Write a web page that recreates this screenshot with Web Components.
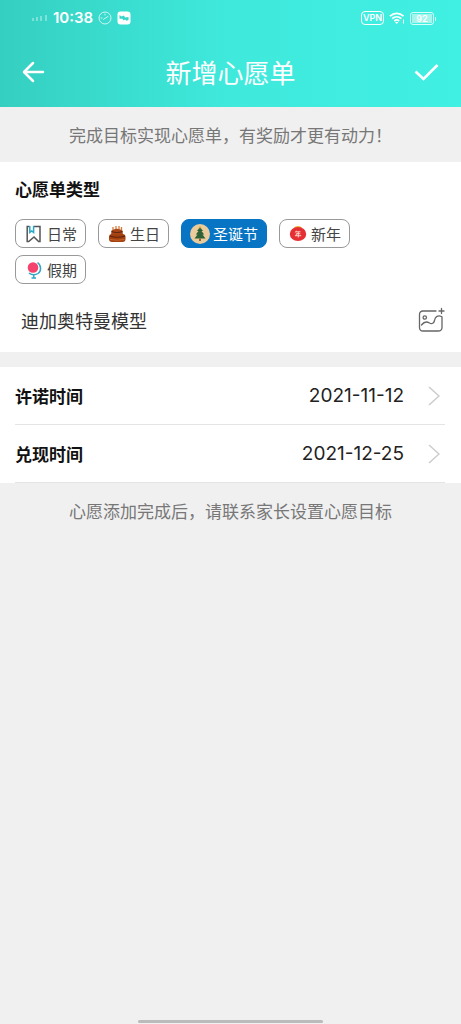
<!DOCTYPE html>
<html lang="zh-CN">
<head>
<meta charset="utf-8">
<meta name="viewport" content="width=device-width, initial-scale=1">
<title>新增心愿单</title>
<style>
  html, body { margin: 0; height: 100%; }
  body {
    background: #f0f0f0;
    color: #111;
    font-family: "Noto Sans CJK SC", "Noto Sans", sans-serif;
  }
</style>
</head>
<body>
<wish-page></wish-page>

<script>
const define = (name, html, setup) => {
  const template = document.createElement('template');
  template.innerHTML = html;
  customElements.define(name, class extends HTMLElement {
    constructor() {
      super();
      this.attachShadow({ mode: 'open' }).append(template.content.cloneNode(true));
    }
    connectedCallback() { if (setup) setup(this, this.shadowRoot); }
  });
};

/* Phone status line: signal, clock, notifications, VPN, wifi, battery */
define('status-bar', `
  <style>
    :host { display: flex; align-items: center; justify-content: space-between; height: 36px; padding: 0 27px 0 32px; color: #fff; font-family: Inter, sans-serif; }
    div { display: flex; align-items: center; }
    .left { gap: 5px; }
    .right { gap: 5px; }
    svg { display: block; }
    time { font-size: 15px; line-height: 20px; font-weight: 600; }
    .vpn { box-sizing: border-box; width: 23px; height: 14px; border: 1px solid #fff; border-radius: 4px; font-size: 9px; line-height: 12px; font-weight: 600; text-align: center; }
    .battery { box-sizing: border-box; width: 24px; height: 13px; padding: 1px; border: 1px solid #d8fffa; border-radius: 3px; position: relative; }
    .battery::after { content: ""; position: absolute; right: -3px; top: 4px; width: 1px; height: 4px; background: #d8fffa; }
    .battery span { display: block; background: #a4f5ec; font-size: 9px; line-height: 9px; font-weight: 600; text-align: center; }
  </style>
  <div class="left">
    <svg width="16" height="8" viewBox="0 0 16 8" fill="#fff" opacity=".35"><rect y="4" width="2" height="3"/><rect x="4" y="3" width="2" height="4"/><rect x="8" y="2" width="2" height="5"/><rect x="13" y="1" width="2" height="6"/></svg>
    <time>10:38</time>
    <svg width="14" height="14" viewBox="0 0 14 14" fill="none" stroke="#fff" stroke-width="1" opacity=".75"><circle cx="7" cy="7" r="6"/><path d="M5.500 8.300 10 5.500M3 7h1M7 3v1" stroke-linecap="round"/></svg>
    <svg width="14" height="14" viewBox="0 0 14 14"><rect x=".5" y=".5" width="13" height="13" rx="3" fill="#fff"/><path d="M2.500 4 4.500 5.500 7 4.500 8 6.500 11.500 6v3L9.500 9.700 8 8.500 6.500 9.500 5.500 7.800H2.500z" fill="#35d6c9"/></svg>
  </div>
  <div class="right">
    <span class="vpn">VPN</span>
    <svg width="16" height="14" viewBox="0 0 16 14" fill="none" stroke="#fff" stroke-width="1.800"><path d="M1 5.200C5 1.300 10.500 1.300 14.500 5.200M3.200 7.700c2.700-2.500 6.400-2.500 9.100 0M5.300 10c1.500-1.300 3.400-1.300 4.900 0"/><path d="M6 11h3.500l-1.800 2z" fill="#fff" stroke="none"/><path d="M14.500 8.500v4" stroke-width="1"/></svg>
    <span class="battery"><span>92</span></span>
  </div>
`);

define('title-bar', `
  <style>
    :host { display: grid; grid-template-columns: 68px 1fr 68px; align-items: center; height: 71px; color: #fff; }
    h1 { margin: 0; font-size: 26px; line-height: 36px; font-weight: 400; text-align: center; }
    button { display: flex; height: 48px; padding: 0 22px; border: 0; background: none; color: inherit; align-items: center; }
    .done { justify-content: flex-end; }
    svg { display: block; flex: none; }
  </style>
  <button class="back" aria-label="返回"><svg width="23" height="22" viewBox="0 0 23 22" fill="none" stroke="currentColor" stroke-width="2.500" stroke-linecap="round" stroke-linejoin="round"><path d="M21 11H2.500M11 2 2 11l9 9"/></svg></button>
  <h1><slot></slot></h1>
  <button class="done" aria-label="完成"><svg width="25" height="20" viewBox="0 0 25 20" fill="none" stroke="currentColor" stroke-width="2.600"><path d="M1.500 9.500 9.500 17 23.500 3"/></svg></button>
`);

define('hint-text', `
  <style>
    :host { display: block; padding: 15px 16px; font-size: 17px; line-height: 25px; color: #777; text-align: center; }
    p { margin: 0; }
  </style>
  <p><slot></slot></p>
`);

/* One radio group of wish categories */
define('wish-types', `
  <style>
    :host { display: block; }
    fieldset { margin: 0; padding: 0; border: 0; min-width: 0; }
    legend { padding: 0; font-size: 17px; line-height: 24px; font-weight: 700; color: #111; }
    .list { display: flex; flex-wrap: wrap; gap: 7px 12px; padding: 18px 16px 0 0; }
    label { box-sizing: border-box; display: flex; align-items: center; gap: 3px; height: 29px; padding: 0 8px; border: 1px solid #999; border-radius: 8px; font-size: 15px; line-height: 22px; color: #444; background: #fff; position: relative; }
    label:has(:checked) { background: #0775c4; border-color: #0775c4; color: #fff; }
    input { position: absolute; inset: 0; margin: 0; opacity: 0; }
    svg { display: block; }
  </style>
  <fieldset>
    <legend>心愿单类型</legend>
    <div class="list">
      <label><input type="radio" name="type" value="daily">
        <svg width="20" height="20" viewBox="0 0 20 20" fill="none" stroke="#555" stroke-width="1.500"><path d="M5.500 2.500H3.200v15h1.500L10 13l4.600 4.500H16v-15H9.500"/><path d="M5.800 2v6.500L7.700 7l1.900 1.500V2" stroke="#28a8c8"/></svg>
        <span>日常</span></label>
      <label><input type="radio" name="type" value="birthday">
        <svg width="20" height="20" viewBox="0 0 20 20"><path d="M6 6V3M9 5V2M12 5V2M14.500 6V3" stroke="#d9783a" stroke-width="1.300"/><path d="M4.500 6.500Q10 3 15.500 6.500l.5 4.500H4z" fill="#a94717"/><rect x="2" y="10" width="16.500" height="8" rx="3" fill="#a3410f"/><path d="M4.500 7.500q5.500 2 11 0M3 12q7 2.500 15 0" fill="none" stroke="#5f2410" stroke-width="1.200"/><path d="M3 15.500q7 1.500 14.500 0" fill="none" stroke="#c7642e"/></svg>
        <span>生日</span></label>
      <label><input type="radio" name="type" value="christmas" checked>
        <svg width="20" height="20" viewBox="0 0 20 20"><circle cx="10" cy="10" r="10" fill="#e9cb9c"/><path d="m10 3 3 4h-1.500l2.700 3.500h-1.700l3 4H4.500l3-4H5.800L8.500 7H7z" fill="#2f6138"/><path d="M9.200 14.500h1.600V17H9.200z" fill="#7b4a25"/><circle cx="10" cy="3.400" r="1" fill="#d9a326"/></svg>
        <span>圣诞节</span></label>
      <label><input type="radio" name="type" value="newyear">
        <svg width="20" height="20" viewBox="0 0 20 20"><ellipse cx="10" cy="4.500" rx="4" ry="2.500" fill="#f3b63b"/><ellipse cx="10" cy="10" rx="8.200" ry="7" fill="#e52f35"/><path d="M8.300 6.800 7.300 8.500M8 7.800h4.500M8.300 9.700h4M8.300 9.700v2M6.900 11.700h6.300M10.300 7.800v5.700" fill="none" stroke="#ffe0cf" stroke-width=".9"/></svg>
        <span>新年</span></label>
      <label><input type="radio" name="type" value="holiday">
        <svg width="20" height="20" viewBox="0 0 20 20" fill="none"><path d="M13.500 2.500c4 3 4 8.500 .5 11-3 2-7 1.500-9-.5M9.800 15v3M7.500 18H12" stroke="#32a7c4" stroke-width="1.500"/><circle cx="9" cy="7.500" r="5.300" fill="#f4436c"/></svg>
        <span>假期</span></label>
    </div>
  </fieldset>
`);

define('wish-name', `
  <style>
    :host { box-sizing: border-box; display: flex; align-items: center; height: 68px; padding: 4px 0 0 6px; }
    input { flex: 1; min-width: 0; height: 32px; margin: 0; padding: 0; border: 0; outline: 0; background: none; color: #333; font: 18px/28px "Noto Sans CJK SC", sans-serif; }
    button { display: block; margin: 0; padding: 0; border: 0; background: none; }
    svg { display: block; }
  </style>
  <input type="text" aria-label="心愿名称" value="迪加奥特曼模型">
  <button aria-label="添加图片"><svg width="27" height="26" viewBox="0 0 27 26" fill="none" stroke="#666" stroke-width="1.300" stroke-linecap="round"><path d="M18 4H5Q1.500 4 1.500 7.500v13Q1.500 24 5 24h15q4 0 4-3.500V10"/><path d="M23.500 1.500v5M21 4h5"/><circle cx="6.800" cy="10.500" r="1.700"/><path d="M3.500 18C6.500 14 9 14.500 11.500 16s4.500 0 5-2.500c.7-4 3.500-5.500 7-4"/></svg></button>
`);

define('date-row', `
  <style>
    :host { display: block; }
    button { box-sizing: border-box; display: flex; align-items: center; width: 100%; height: 58px; margin: 0; padding: 0 5px 0 0; border: 0; border-bottom: 1px solid #e4e4e4; background: none; color: #111; font-family: inherit; text-align: left; }
    .label { flex: 1; font-size: 17px; line-height: 24px; font-weight: 700; }
    .value { margin-right: 24px; font: 19px/24px Inter, sans-serif; color: #222; }
    svg { display: block; }
  </style>
  <button><span class="label"><slot></slot></span><span class="value"></span><svg width="12" height="20" viewBox="0 0 12 20" fill="none" stroke="#ccc" stroke-width="1.500"><path d="m1 1 10 9-10 9"/></svg></button>
`, (host, root) => { root.querySelector('.value').textContent = host.getAttribute('value'); });

define('wish-page', `
  <style>
    :host { display: flex; flex-direction: column; min-height: 100vh; }
    header { background: linear-gradient(90deg, #35cfc1 0%, #3be2d4 35%, #3fe9dc 50%, #40f0e2 100%); }
    main { flex: 1; }
    .card { background: #fff; padding: 15px 16px 0 15px; margin-bottom: 15px; }
    .dates { background: #fff; padding: 0 16px 0 15px; }
    .home { width: 40%; height: 3px; margin: 0 auto 1px; border-radius: 2px; background: #bbb; }
  </style>
  <header><status-bar></status-bar><title-bar>新增心愿单</title-bar></header>
  <main>
    <hint-text>完成目标实现心愿单，有奖励才更有动力！</hint-text>
    <section class="card"><wish-types></wish-types><wish-name></wish-name></section>
    <section class="dates">
      <date-row value="2021-11-12">许诺时间</date-row>
      <date-row value="2021-12-25">兑现时间</date-row>
    </section>
    <hint-text>心愿添加完成后，请联系家长设置心愿目标</hint-text>
  </main>
  <div class="home"></div>
`);
</script>
</body>
</html>
